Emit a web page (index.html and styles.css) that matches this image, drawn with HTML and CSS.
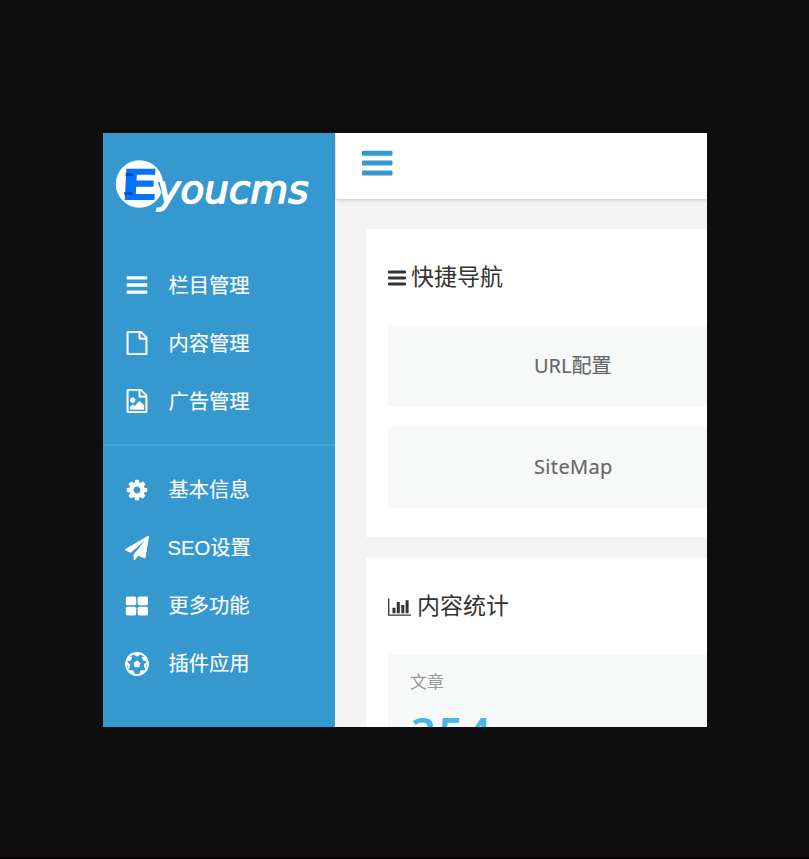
FILE: index.html
```html
<!DOCTYPE html>
<html lang="zh-CN">
<head>
<meta charset="utf-8">
<title>Eyoucms</title>
<link rel="stylesheet" href="styles.css">
</head>
<body>
<div class="frame">
  <aside class="sidebar">
    <svg class="logo" viewBox="0 0 232 122" aria-label="Eyoucms">
      <circle cx="36.500" cy="51" r="23.700" fill="#fff"/>
      <text class="logo-e" transform="translate(16.500 66.500) skewX(-3) scale(1.330 1)" x="0" y="0">E</text>
      <path d="M22.800 40h7.500v3H22.500zM21.400 59h7.500v3h-7.700z" fill="#0a4db5"/>
      <path d="M55 49h3.500l1.500 7-1.500 4z" fill="#0b6bf2"/>
      <text class="logo-text" x="54.500" y="69.500" textLength="151" lengthAdjust="spacingAndGlyphs">youcms</text>
    </svg>
    <nav class="group">
      <a class="item"><svg class="icon" viewBox="0 0 24 24"><path d="M1.700 3.200h20.500v3.400H1.700zM1.700 10.300h20.500v3.400H1.700zM1.700 17.400h20.500v3.400H1.700z"/></svg><span>栏目管理</span></a>
      <a class="item"><svg class="icon icon-file" viewBox="0 0 1792 1792"><path d="M1596 380q28 28 48 76t20 88v1152q0 40-28 68t-68 28h-1344q-40 0-68-28t-28-68v-1600q0-40 28-68t68-28h896q40 0 88 20t76 48zm-444-244v376h376q-10-29-22-41l-313-313q-12-12-41-22zm384 1528v-1024h-416q-40 0-68-28t-28-68v-416h-768v1536h1280z"/></svg><span>内容管理</span></a>
      <a class="item"><svg class="icon icon-file" viewBox="0 0 1792 1792"><path d="M1596 380q28 28 48 76t20 88v1152q0 40-28 68t-68 28h-1344q-40 0-68-28t-28-68v-1600q0-40 28-68t68-28h896q40 0 88 20t76 48zm-444-244v376h376q-10-29-22-41l-313-313q-12-12-41-22zm384 1528v-1024h-416q-40 0-68-28t-28-68v-416h-768v1536h1280zm-128-448v320h-1024v-192l192-192 128 128 384-384zm-832-192q-80 0-136-56t-56-136 56-136 136-56 136 56 56 136-56 136-136 56z"/></svg><span>广告管理</span></a>
    </nav>
    <nav class="group group-settings">
      <a class="item"><svg class="icon" viewBox="0 0 1792 1792"><path d="M1152 896q0-106-75-181t-181-75-181 75-75 181 75 181 181 75 181-75 75-181zm512-109v222q0 12-8 23t-20 13l-185 28q-19 54-39 91 35 50 107 138 10 12 10 25t-9 23q-27 37-99 108t-94 71q-12 0-26-9l-138-108q-44 23-91 38-16 136-29 186-7 28-36 28h-222q-14 0-24.500-8.500t-11.500-21.500l-28-184q-49-16-90-37l-141 107q-10 9-25 9-14 0-25-11-126-114-165-168-7-10-7-23 0-12 8-23 15-21 51-66.500t54-70.500q-27-50-41-99l-183-27q-13-2-21-12.500t-8-23.500v-222q0-12 8-23t19-13l186-28q14-46 39-92-40-57-107-138-10-12-10-24 0-10 9-23 26-36 98.500-107.500t94.500-71.500q13 0 26 10l138 107q44-23 91-38 16-136 29-186 7-28 36-28h222q14 0 24.500 8.500t11.500 21.500l28 184q49 16 90 37l142-107q9-9 24-9 13 0 25 10 129 119 165 170 7 8 7 22 0 12-8 23-15 21-51 66.500t-54 70.500q26 50 41 98l183 28q13 2 21 12.500t8 23.500z"/></svg><span>基本信息</span></a>
      <a class="item"><svg class="icon" viewBox="0 0 1792 1792"><path d="M1764 11q33 24 27 64l-256 1536q-5 29-32 45-14 8-31 8-11 0-24-5l-453-185-242 295q-18 23-49 23-13 0-22-4-19-7-30.500-23.500t-11.500-36.500v-349l864-1059-1069 925-395-162q-37-14-40-55-2-40 32-59l1664-960q15-9 32-9 20 0 36 11z"/></svg><span class="mixed">SEO设置</span></a>
      <a class="item"><svg class="icon" viewBox="0 0 24 24"><rect x=".8" y="2.500" width="10.400" height="8.700" rx="1.600"/><rect x="12.600" y="2.500" width="10.400" height="8.700" rx="1.600"/><rect x=".8" y="12.700" width="10.400" height="8.700" rx="1.600"/><rect x="12.600" y="12.700" width="10.400" height="8.700" rx="1.600"/></svg><span>更多功能</span></a>
      <a class="item"><svg class="icon" viewBox="0 0 24 24"><circle cx="12" cy="12" r="11" fill="none" stroke="#fff" stroke-width="1.800"/><path d="M12 8.400l3.600 2.600-1.400 4.300H9.800L8.400 11zM7.500 1.500L12 4.800l4.500-3.300zM1 8.500l4.200 3.900-1.400 5.800zM23 8.500l-4.200 3.900 1.400 5.800zM9.500 23.400L8.600 18.500 3 18zM14.500 23.400l.9-4.900L21 18zM3 5l4.200-.2L6 8.600 2 9.500zM21 5l-4.200-.2L18 8.600l4 .9z"/></svg><span>插件应用</span></a>
    </nav>
  </aside>
  <div class="content">
    <header class="topbar">
      <svg class="menu" viewBox="0 0 32 26"><rect y=".7" width="30.500" height="5" rx="1"/><rect y="10.600" width="30.500" height="5" rx="1"/><rect y="20.500" width="30.500" height="5" rx="1"/></svg>
    </header>
    <main class="main">
      <section class="panel panel-nav">
        <h2 class="title"><svg class="title-bars" viewBox="0 0 18 16"><path d="M1.200 2h15.600M1.200 8h15.600M1.200 14h15.600"/></svg><span>快捷导航</span></h2>
        <div class="tile"><span>URL配置</span></div>
        <div class="tile"><span class="latin">SiteMap</span></div>
      </section>
      <section class="panel panel-stats">
        <h2 class="title"><svg class="title-chart" viewBox="0 0 24 20"><path d="M.7 1.500v16.700H23" fill="none" stroke="#333" stroke-width="1.300"/><path d="M4.500 10.700h3v5.500h-3zM8.800 5h3v11.200h-3zM13.300 8h3v8.200h-3zM17.600 3.300h3v12.900h-3z"/></svg><span>内容统计</span></h2>
        <div class="stat"><div class="label">文章</div><div class="value">354</div></div>
      </section>
    </main>
  </div>
</div>
</body>
</html>
```
FILE: styles.css
```css
* { box-sizing: border-box; }
html, body { margin: 0; }
body {
  height: 859px;
  padding: 133px 0 0 103px;
  overflow: hidden;
  background: #0e0e0e;
  border-bottom: 2px solid #080307;
  font-family: "Noto Sans", "Noto Sans CJK SC", sans-serif;
}
.frame { display: flex; width: 604px; height: 594px; overflow: hidden; background: #f3f3f3; }
.sidebar { flex: 0 0 232px; background: #3598ce; color: #fff; }
.logo { display: block; width: 232px; height: 122px; }
.logo-e { font: bold 43px "DejaVu Sans", sans-serif; fill: #0472fb; }
.logo-text { font: italic 400 37px "DejaVu Sans", sans-serif; fill: #fff; stroke: #fff; stroke-width: 1.500; }
.group { display: flex; flex-direction: column; height: 189px; padding-top: 1px; }
.group-settings { height: auto; padding-top: 15px; border-top: 2px solid #4da6d8; }
.item {
  display: flex; align-items: center; gap: 20px; height: 58px; padding-left: 21.500px;
  font-family: "Liberation Sans", "Noto Sans CJK SC", sans-serif;
  font-size: 20.300px; line-height: 30px; white-space: nowrap;
  -webkit-text-stroke: .15px currentColor;
}
.group:not(.group-settings) .item span { padding-top: 1px; }
.mixed { margin-left: -1px; }
.icon { flex: none; width: 24px; height: 24px; fill: #fff; }
.icon-file { stroke: #fff; stroke-width: 24px; }
.content { flex: 1; min-width: 0; display: flex; flex-direction: column; border-left: 1px solid #f6fafc; }
.topbar { flex: 0 0 66px; padding: 17px 0 0 25.500px; background: #fff; box-shadow: 0 1px 4px rgba(0,0,0,.18); }
.menu { display: block; width: 32px; height: 26px; fill: #3598ce; }
.main { flex: none; display: flex; flex-direction: column; gap: 21px; padding: 30px 0 0 30px; }
.panel { padding-left: 22px; background: #fff; }
.panel-nav { height: 308px; }
.panel-stats { height: 200px; }
.title {
  display: flex; align-items: center; height: 96px; margin: 0; padding-bottom: 4px;
  color: #333; font-family: "Noto Sans CJK SC", sans-serif; font-size: 23px; font-weight: 400; line-height: 34px;
}
.title-bars { width: 18px; height: 16px; margin: 6px 5px 0 0; fill: none; stroke: #333; stroke-width: 2.800; stroke-linecap: round; }
.title-chart { width: 24px; height: 20px; margin: 6px 5px 0 0; fill: #333; }
.tile {
  display: flex; align-items: center; height: 81px; margin-bottom: 21px; padding: 0 0 2px 146px;
  background: #f7f8f8; color: #666; font-size: 20px; font-weight: 400;
  -webkit-text-stroke: .15px currentColor;
}
.latin { letter-spacing: .35px; }
.stat { height: 104px; padding: 15px 22px; background: #f7f8f8; }
.label { color: #999; font-size: 17px; line-height: 26px; }
.value { margin: 13px 0 0 1px; color: #45b9e3; font-size: 43px; font-weight: 600; line-height: 50px; letter-spacing: 3px; }
```
